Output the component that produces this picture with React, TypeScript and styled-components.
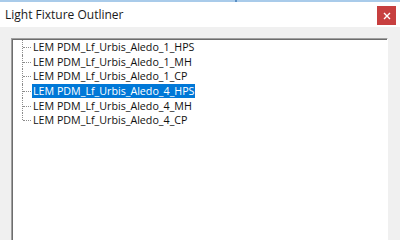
import styled, { createGlobalStyle } from "styled-components";

const items = [
  "LEM PDM_Lf_Urbis_Aledo_1_HPS",
  "LEM PDM_Lf_Urbis_Aledo_1_MH",
  "LEM PDM_Lf_Urbis_Aledo_1_CP",
  "LEM PDM_Lf_Urbis_Aledo_4_HPS",
  "LEM PDM_Lf_Urbis_Aledo_4_MH",
  "LEM PDM_Lf_Urbis_Aledo_4_CP",
];

const selectedIndex = 3;

const Global = createGlobalStyle`
  html, body {
    margin: 0;
    padding: 0;
    background: #f0f0f0;
    overflow: hidden;
  }
`;

const Window = styled.div`
  width: 400px;
  height: 240px;
  display: flex;
  flex-direction: column;
  background: #f0f0f0;
  font-family: "Open Sans", "Noto Sans", Arial, sans-serif;
  overflow: hidden;
`;

const TopStrip = styled.div`
  height: 2px;
  flex-shrink: 0;
  background: #a9cbea;
  display: flex;
  padding-left: 235px;
`;

const StripMark = styled.div`
  width: 2px;
  height: 2px;
  background: #5b8fc4;
`;

const TitleBar = styled.div`
  height: 25px;
  flex-shrink: 0;
  background: #ffffff;
  display: flex;
  align-items: center;
  justify-content: space-between;
  padding: 0 4px 0 5px;
`;

const Title = styled.span`
  font-size: 12px;
  color: #1a1a1a;
`;

const CloseButton = styled.div`
  width: 19px;
  height: 19px;
  margin-top: 2px;
  background: #c73f3f;
  display: flex;
  align-items: center;
  justify-content: center;
`;

const Body = styled.div`
  flex: 1;
  display: flex;
  padding: 11px 12px 0 11px;
`;

const ListBox = styled.div`
  flex: 1;
  background: #ffffff;
  border-top: 1px solid #a0a0a0;
  border-left: 1px solid #a0a0a0;
  border-right: 1px solid #ffffff;
  box-shadow: inset 1px 1px 0 #6d6d6d;
  padding: 1px 0 0 1px;
`;

const Tree = styled.ul`
  margin: 0;
  padding: 0 0 0 9px;
  list-style: none;
`;

const Row = styled.li<{ $last?: boolean }>`
  height: 14.6px;
  display: flex;
  align-items: center;
  position: relative;
  padding-left: 10px;

  &::before {
    content: "";
    position: absolute;
    left: 0;
    top: 0;
    height: ${({ $last }) => ($last ? "50%" : "100%")};
    border-left: 1px dotted #8c8c8c;
  }

  &::after {
    content: "";
    position: absolute;
    left: 1px;
    top: 50%;
    width: 8px;
    border-top: 1px dotted #8c8c8c;
  }
`;

const Label = styled.span<{ $selected?: boolean }>`
  font-size: 10.7px;
  line-height: 14px;
  padding: 0 1px;
  color: ${({ $selected }) => ($selected ? "#ffffff" : "#111111")};
  background: ${({ $selected }) => ($selected ? "#0078d7" : "transparent")};
  white-space: nowrap;
`;

export default function App() {
  return (
    <Window>
      <Global />
      <TopStrip>
        <StripMark />
      </TopStrip>
      <TitleBar>
        <Title>Light Fixture Outliner</Title>
        <CloseButton>
          <svg width="8" height="8" viewBox="0 0 8 8">
            <path d="M1 1 L7 7 M7 1 L1 7" stroke="#ffffff" strokeWidth="1.4" />
          </svg>
        </CloseButton>
      </TitleBar>
      <Body>
        <ListBox>
          <Tree>
            {items.map((name, i) => (
              <Row key={name} $last={i === items.length - 1}>
                <Label $selected={i === selectedIndex}>{name}</Label>
              </Row>
            ))}
          </Tree>
        </ListBox>
      </Body>
    </Window>
  );
}
